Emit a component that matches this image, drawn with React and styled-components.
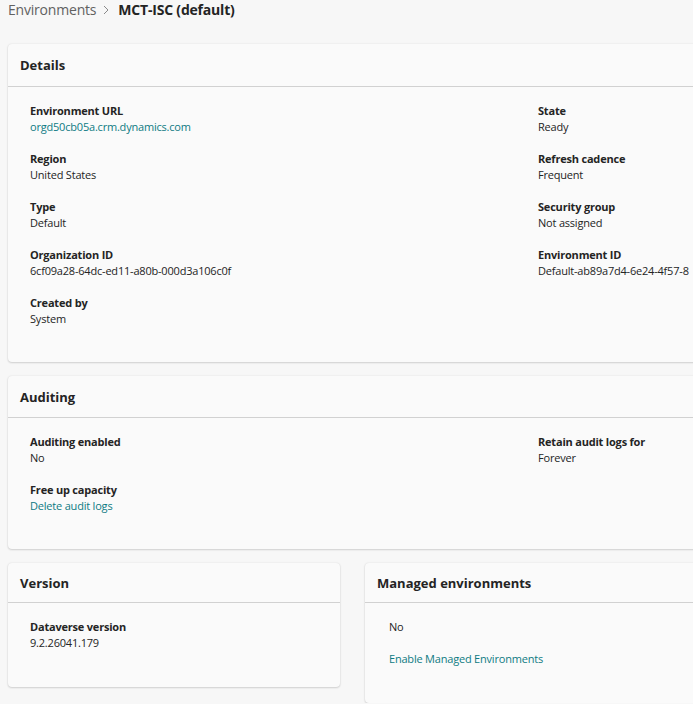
import React from 'react';
import styled, { createGlobalStyle } from 'styled-components';

const GlobalStyle = createGlobalStyle`
  html, body {
    margin: 0;
    padding: 0;
    overflow: hidden;
    background: #f7f7f7;
    font-family: "Open Sans", "Noto Sans", Arial, sans-serif;
    color: #242424;
  }
`;

const Page = styled.div`
  width: 689px;
  padding: 0 8px;
  display: flex;
  flex-direction: column;
  gap: 14px;
`;

const Breadcrumb = styled.nav`
  display: flex;
  align-items: center;
  height: 20px;
  margin-bottom: 10px;
  font-size: 14px;
  line-height: 20px;
  letter-spacing: -0.2px;
`;

const Crumb = styled.span`
  color: #616161;
`;

const Current = styled.span`
  color: #242424;
  font-weight: 700;
`;

const Chevron = styled.svg`
  width: 12px;
  height: 12px;
  margin: 0 6px 0 4px;
`;

const Card = styled.section`
  background: #fafafa;
  border-radius: 4px;
  box-shadow: 0 1px 2px rgba(0, 0, 0, 0.14), 0 0 2px rgba(0, 0, 0, 0.1);
  min-width: 0;
`;

const CardHeader = styled.header`
  height: ${p => p.$h || 42}px;
  display: flex;
  align-items: center;
  padding: 0 12px;
  border-bottom: 1px solid #d1d1d1;
  font-size: 13px;
  font-weight: 700;
`;

const CardBody = styled.div`
  display: grid;
  grid-template-columns: ${p => (p.$cols ? '508px 1fr' : '1fr')};
  row-gap: 16px;
  padding: 16px ${p => p.$px || 22}px ${p => p.$pb || 35}px;
`;

const Field = styled.div`
  display: flex;
  flex-direction: column;
  font-size: 11px;
  line-height: 16px;
  letter-spacing: -0.2px;
  white-space: nowrap;
`;

const Label = styled.span`
  font-weight: 700;
`;

const Value = styled.span`
  color: #242424;
`;

const Link = styled.a`
  color: #0e7a83;
  text-decoration: none;
  cursor: pointer;
`;

const Row = styled.div`
  display: grid;
  grid-template-columns: 332px 1fr;
  gap: 25px;
  align-items: start;
`;

const Plain = styled.div`
  font-size: 11px;
  line-height: 16px;
  letter-spacing: -0.2px;
`;

function Item({ label, children }) {
  return (
    <Field>
      <Label>{label}</Label>
      <Value>{children}</Value>
    </Field>
  );
}

export default function App() {
  return (
    <>
      <GlobalStyle />
      <Page>
        <Breadcrumb>
          <Crumb>Environments</Crumb>
          <Chevron viewBox="0 0 12 12">
            <path d="M4 2l4 4-4 4" fill="none" stroke="#8a8a8a" strokeWidth="1" />
          </Chevron>
          <Current>MCT-ISC (default)</Current>
        </Breadcrumb>

        <Card>
          <CardHeader>Details</CardHeader>
          <CardBody $cols>
            <Item label="Environment URL"><Link>orgd50cb05a.crm.dynamics.com</Link></Item>
            <Item label="State">Ready</Item>
            <Item label="Region">United States</Item>
            <Item label="Refresh cadence">Frequent</Item>
            <Item label="Type">Default</Item>
            <Item label="Security group">Not assigned</Item>
            <Item label="Organization ID">6cf09a28-64dc-ed11-a80b-000d3a106c0f</Item>
            <Item label="Environment ID">Default-ab89a7d4-6e24-4f57-8</Item>
            <Item label="Created by">System</Item>
          </CardBody>
        </Card>

        <Card>
          <CardHeader $h={41}>Auditing</CardHeader>
          <CardBody $cols>
            <Item label="Auditing enabled">No</Item>
            <Item label="Retain audit logs for">Forever</Item>
            <Item label="Free up capacity"><Link>Delete audit logs</Link></Item>
          </CardBody>
        </Card>

        <Row>
          <Card>
            <CardHeader $h={39}>Version</CardHeader>
            <CardBody $pb={36}>
              <Item label="Dataverse version">9.2.26041.179</Item>
            </CardBody>
          </Card>
          <Card>
            <CardHeader $h={39}>Managed environments</CardHeader>
            <CardBody $px={24} $pb={36}>
              <Plain>No</Plain>
              <Plain><Link>Enable Managed Environments</Link></Plain>
            </CardBody>
          </Card>
        </Row>
      </Page>
    </>
  );
}
